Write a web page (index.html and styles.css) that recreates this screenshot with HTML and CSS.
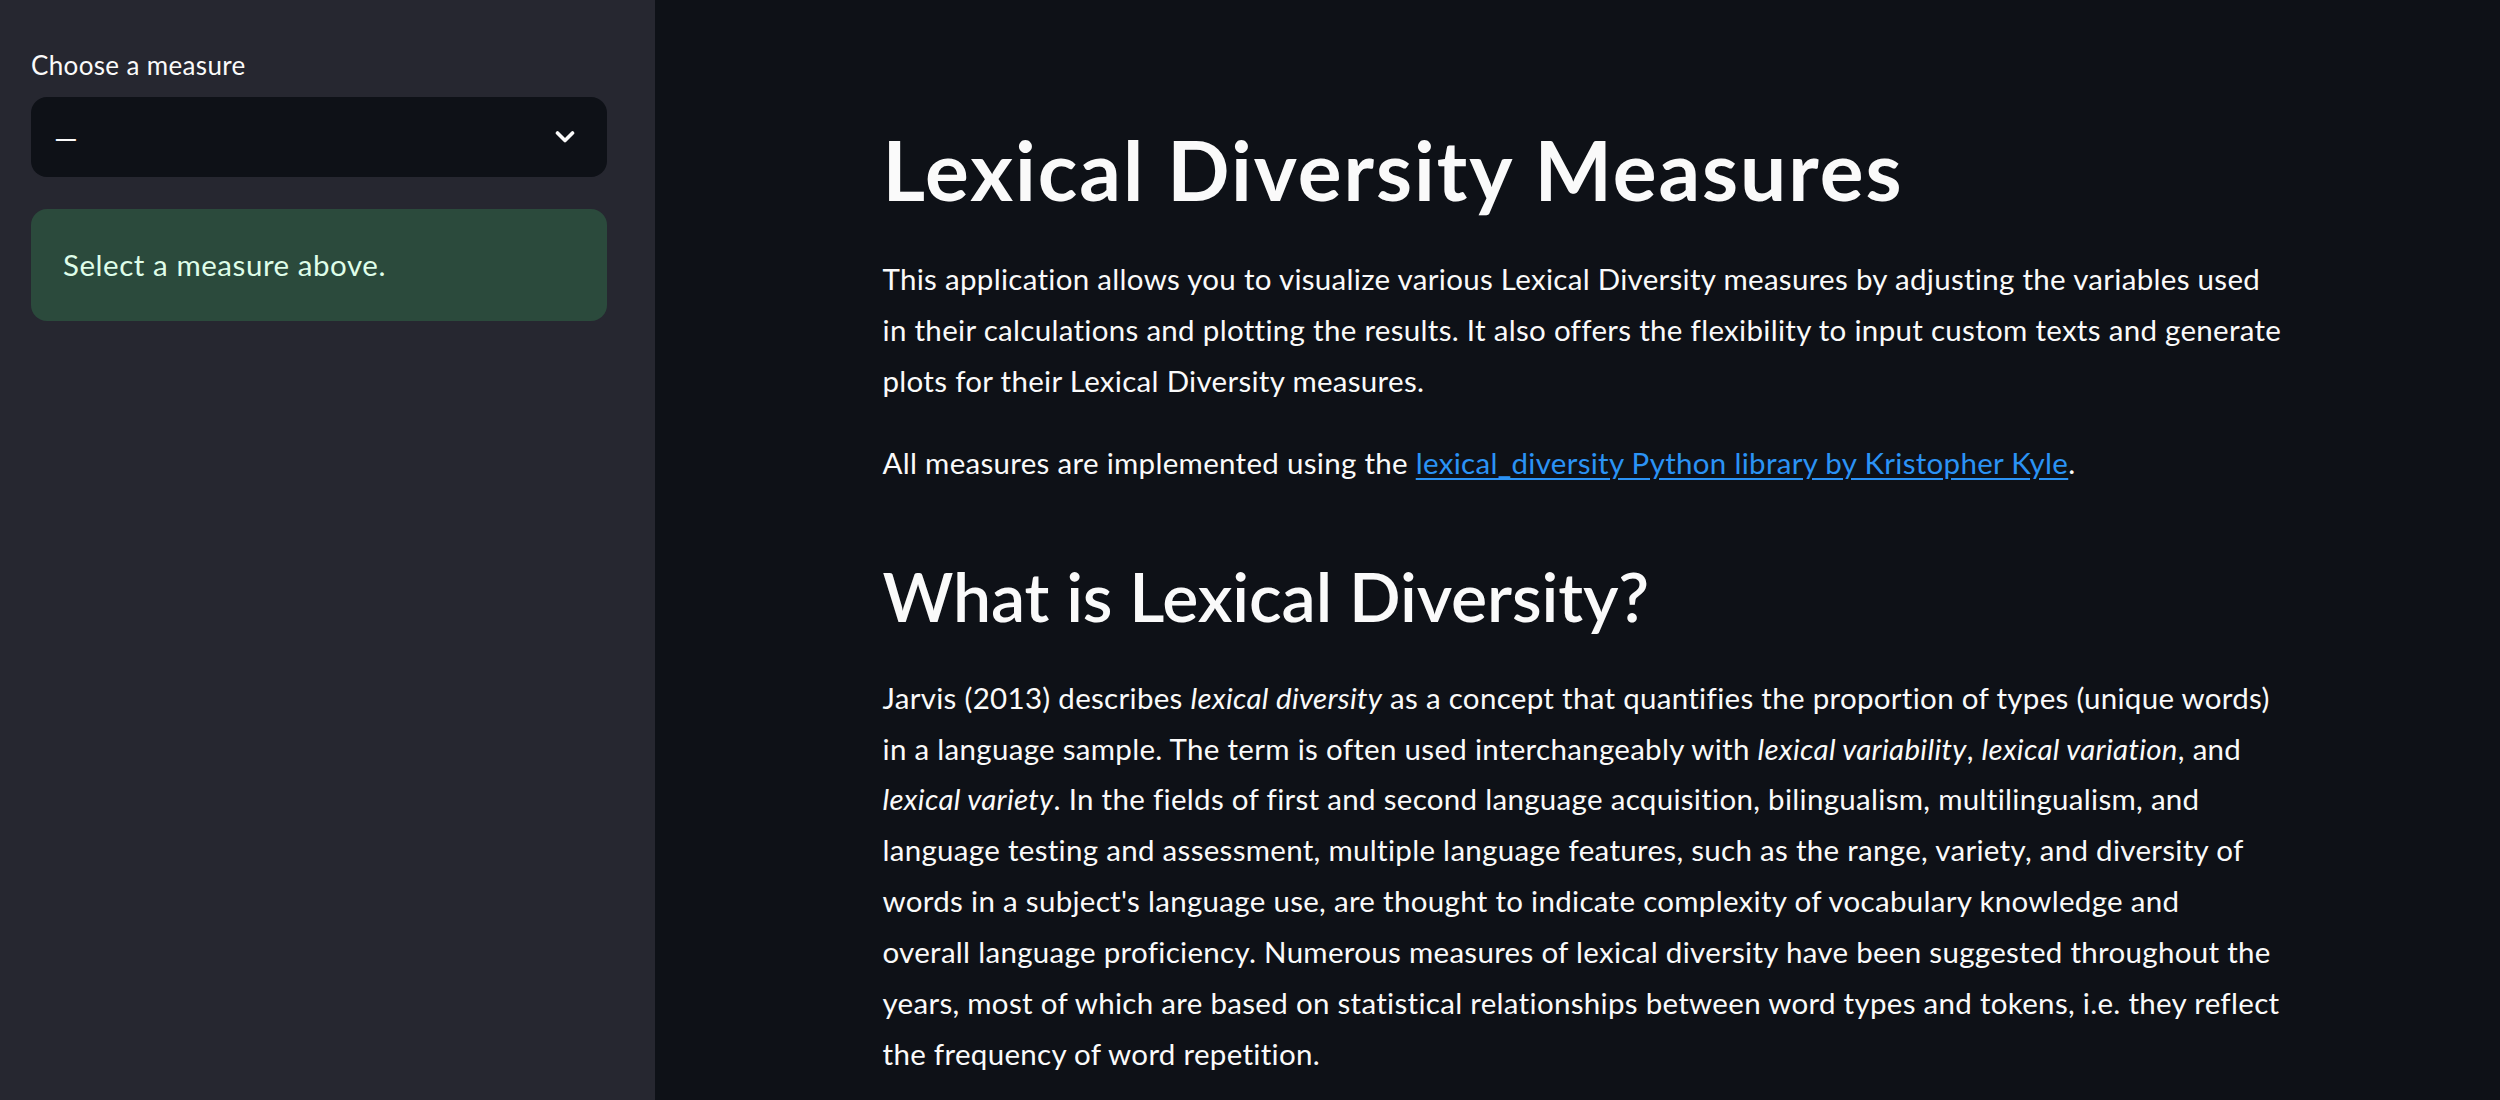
FILE: index.html
```html
<!DOCTYPE html>
<html lang="en">
<head>
<meta charset="utf-8">
<title>Lexical Diversity Measures</title>
<link rel="stylesheet" href="styles.css">
</head>
<body>
<div class="app">
  <aside class="sidebar">
    <label class="field-label">Choose a measure</label>
    <div class="select">
      <span class="select-value">—</span>
      <svg class="chevron" viewBox="0 0 20 12" aria-hidden="true"><polyline points="2.5,2 10,9.5 17.5,2"/></svg>
    </div>
    <div class="alert">Select a measure above.</div>
  </aside>
  <main class="main">
    <div class="block">
      <h1>Lexical Diversity Measures</h1>
      <p>This application allows you to visualize various Lexical Diversity measures by adjusting the variables used in their calculations and plotting the results. It also offers the flexibility to input custom texts and generate plots for their Lexical Diversity measures.</p>
      <p>All measures are implemented using the <a href="#">lexical_diversity Python library by Kristopher Kyle</a>.</p>
      <h2>What is Lexical Diversity?</h2>
      <p>Jarvis (2013) describes <em>lexical diversity</em> as a concept that quantifies the proportion of types (unique words) in a language sample. The term is often used interchangeably with <em>lexical variability</em>, <em>lexical variation</em>, and <em>lexical variety</em>. In the fields of first and second language acquisition, bilingualism, multilingualism, and language testing and assessment, multiple language features, such as the range, variety, and diversity of words in a subject's language use, are thought to indicate complexity of vocabulary knowledge and overall&nbsp;language proficiency. Numerous measures of lexical diversity have been suggested throughout the years, most of which are based on statistical relationships between word types and tokens, i.e. they reflect the frequency of word repetition.</p>
    </div>
  </main>
</div>
</body>
</html>
```

FILE: styles.css
```css
html, body {
  margin: 0;
  padding: 0;
  height: 100%;
}

body {
  font-family: Lato, "Liberation Sans", sans-serif;
  color: #fafafa;
  background: #0e1117;
  overflow: hidden;
}

.app {
  display: flex;
  height: 1100px;
}

.sidebar {
  width: 655px;
  flex: 0 0 655px;
  box-sizing: border-box;
  background: #262730;
  padding: 47px 48px 0 31px;
  display: flex;
  flex-direction: column;
}

.field-label {
  display: block;
  font-size: 26px;
  line-height: 36px;
  letter-spacing: 0.35px;
  color: #fafafa;
  margin-bottom: 14px;
}

.select {
  height: 80px;
  border-radius: 16px;
  background: #0e1117;
  display: flex;
  align-items: center;
  justify-content: space-between;
  padding: 0 32px 0 23px;
}

.select-value {
  font-size: 30px;
  line-height: 1;
  color: #fafafa;
}

.chevron {
  width: 20px;
  height: 12px;
  fill: none;
  stroke: #fafafa;
  stroke-width: 3.6;
  stroke-linecap: round;
  stroke-linejoin: round;
}

.alert {
  margin-top: 32px;
  padding: 32px;
  border-radius: 16px;
  background: #2b4a3c;
  color: #dffde9;
  font-size: 29.5px;
  line-height: 48px;
  letter-spacing: 0.55px;
}

.main {
  flex: 1;
  display: flex;
  justify-content: center;
  padding-left: 18px;
}

.block {
  width: 1408px;
  padding-top: 120px;
}

h1 {
  margin: 0 0 36px;
  font-size: 82px;
  line-height: 1.2;
  font-weight: 700;
  letter-spacing: 2px;
}

h2 {
  margin: 66px 0 36px;
  font-size: 68px;
  line-height: 1.2;
  font-weight: 600;
  letter-spacing: -0.1px;
}

p {
  margin: 0 0 31px;
  font-size: 29.5px;
  line-height: 50.9px;
  letter-spacing: 0.3px;
}

a {
  color: #2b93f5;
  text-decoration: underline;
  text-underline-offset: 4px;
}

em {
  font-style: italic;
}
```
